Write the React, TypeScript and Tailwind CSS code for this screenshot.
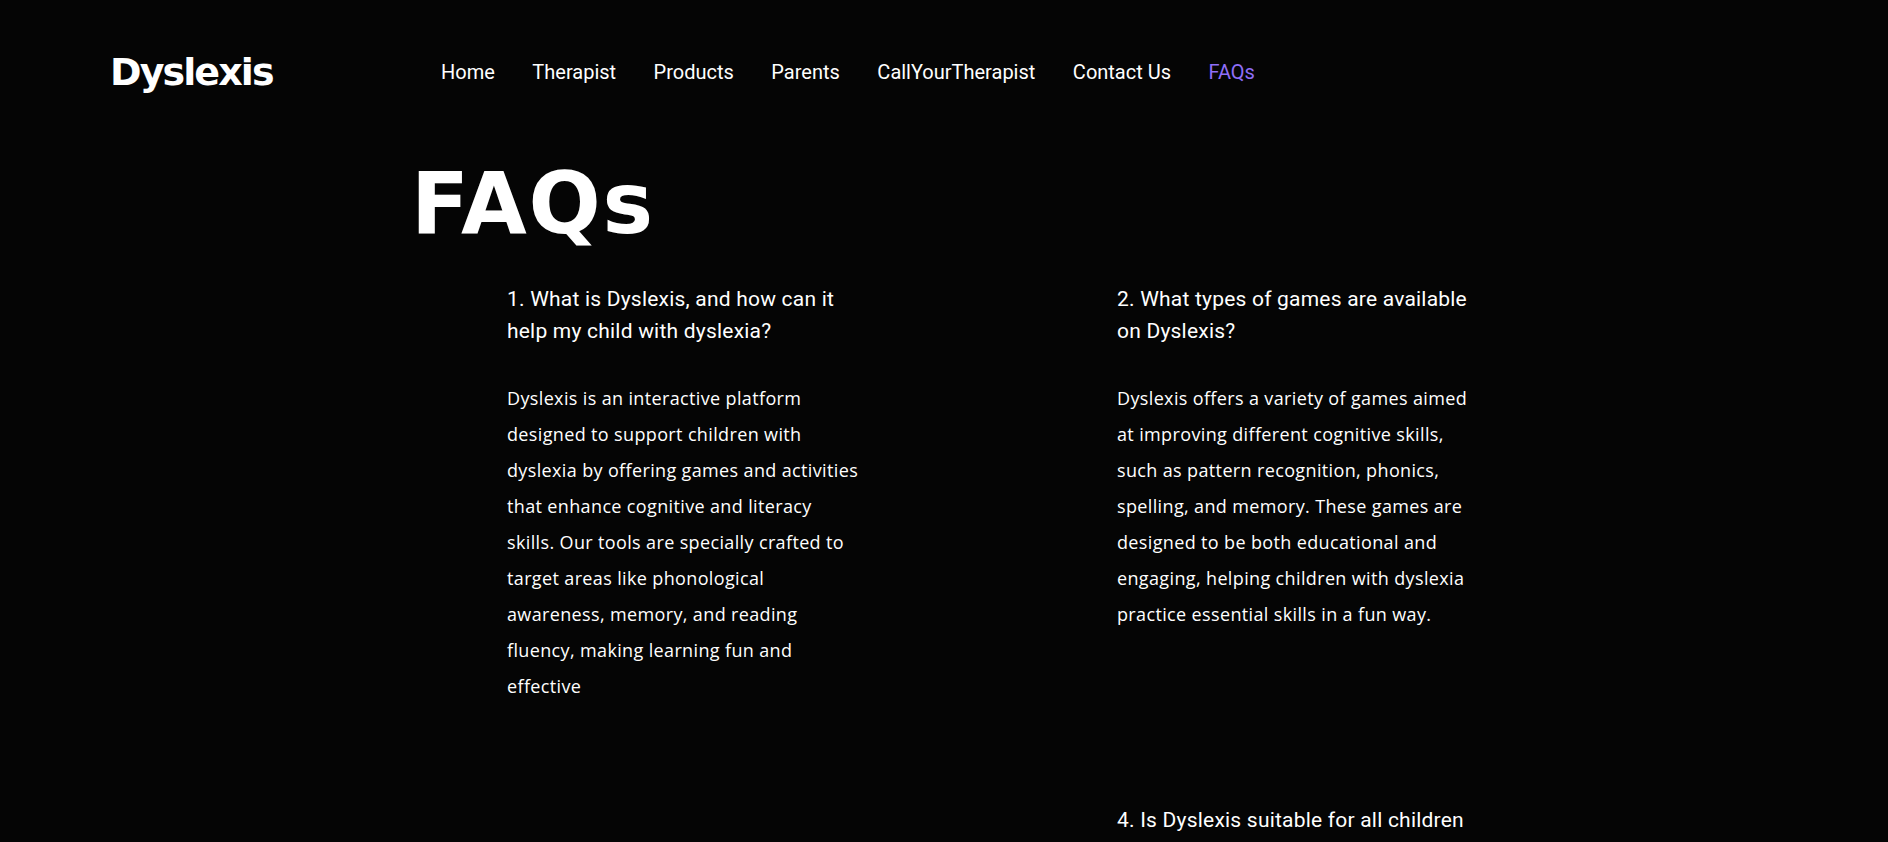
import React from 'react';

const links = ['Home', 'Therapist', 'Products', 'Parents', 'CallYourTherapist', 'Contact Us', 'FAQs'];

const faqs = [
  {
    q: '1. What is Dyslexis, and how can it help my child with dyslexia?',
    a: 'Dyslexis is an interactive platform designed to support children with dyslexia by offering games and activities that enhance cognitive and literacy skills. Our tools are specially crafted to target areas like phonological awareness, memory, and reading fluency, making learning fun and effective',
  },
  {
    q: '2. What types of games are available on Dyslexis?',
    a: 'Dyslexis offers a variety of games aimed at improving different cognitive skills, such as pattern recognition, phonics, spelling, and memory. These games are designed to be both educational and engaging, helping children with dyslexia practice essential skills in a fun way.',
  },
  {
    q: '3. How can parents track their child’s progress?',
    a: 'Parents can follow their child’s progress from the Parents section, where scores and activity history are shown for every game played.',
  },
  {
    q: '4. Is Dyslexis suitable for all children with dyslexia?',
    a: 'Dyslexis is designed for a wide range of ages and levels, and games can be adjusted to match each child’s needs.',
  },
];

const FaqItem = ({ q, a }: { q: string; a: string }) => (
  <div className="w-[358px] mb-[172px]">
    <h3 className="font-['Roboto',sans-serif] text-[21px] leading-8 tracking-[0.01em] text-white">{q}</h3>
    <p className="w-[354px] mt-[33px] font-['Open_Sans',sans-serif] text-[18px] leading-9 tracking-[0.02em] text-white">
      {a}
    </p>
  </div>
);

export default function App() {
  const left = faqs.filter((_, i) => i % 2 === 0);
  const right = faqs.filter((_, i) => i % 2 === 1);

  return (
    <div className="min-h-screen bg-[#050505] text-white">
      {/* Header */}
      <header className="h-[144px] flex items-center pl-[110px]">
        <div className="w-[331px] font-['DejaVu_Sans',sans-serif] font-bold text-[38px] leading-none tracking-[-0.05em]">
          Dyslexis
        </div>
        <nav className="flex items-center gap-[37.5px]">
          {links.map((l) => (
            <a
              key={l}
              href="#"
              className={`font-['Roboto',sans-serif] text-[20px] leading-7 ${
                l === 'FAQs' ? 'text-[#8f6ef7]' : 'text-white'
              }`}
            >
              {l}
            </a>
          ))}
        </nav>
      </header>

      {/* FAQs */}
      <main className="pt-[17px] pl-[411px]">
        <h1 className="font-['DejaVu_Sans',sans-serif] font-bold text-[85px] leading-none tracking-[0.02em]">
          FAQs
        </h1>
        <div className="mt-[37px] ml-[96px] flex gap-[252px]">
          <div className="flex flex-col">
            {left.map((f) => (
              <FaqItem key={f.q} q={f.q} a={f.a} />
            ))}
          </div>
          <div className="flex flex-col">
            {right.map((f) => (
              <FaqItem key={f.q} q={f.q} a={f.a} />
            ))}
          </div>
        </div>
      </main>
    </div>
  );
}
